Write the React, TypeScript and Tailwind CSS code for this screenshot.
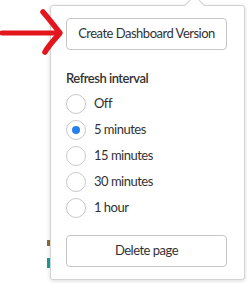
import { useState } from "react";

const options = ["Off", "5 minutes", "15 minutes", "30 minutes", "1 hour"];

function Radio({ label, checked, onSelect }: { label: string; checked: boolean; onSelect: () => void }) {
  return (
    <label className="flex h-[26px] cursor-pointer items-center gap-2" onClick={onSelect}>
      <span className="flex h-5 w-5 items-center justify-center rounded-full border border-[#c9c9c9] bg-white">
        {checked && <span className="h-2 w-2 rounded-full bg-[#2680eb]" />}
      </span>
      <span className="text-[13px] tracking-[-0.5px] text-[#323232]">{label}</span>
    </label>
  );
}

export default function App() {
  const [selected, setSelected] = useState("5 minutes");

  return (
    <div className="relative h-[283px] w-[247px] overflow-hidden bg-white" style={{ fontFamily: "Lato, 'Noto Sans', sans-serif" }}>
      {/* page content peeking out behind the popover */}
      <div className="absolute left-[47px] top-[240px] h-[6px] w-[3px] bg-[#8a6d2f]" />
      <div className="absolute left-[47px] top-[258px] h-[10px] w-[3px] bg-[#14a09a]" />

      <div className="ml-[50px] mt-[5px] w-[195px]">
        <div className="relative flex flex-col rounded-[3px] border border-[#d3d3d3] bg-white px-[15px] pb-[12px] pt-[12px] shadow-[0_1px_4px_rgba(0,0,0,0.15)]">
          <div className="absolute -top-[8px] left-[136px] h-[15px] w-[15px] rotate-45 border-l border-t border-[#d3d3d3] bg-white" />

          <button className="relative h-8 w-[161px] whitespace-nowrap rounded-[4px] border border-[#c6c6c6] bg-white text-[13px] tracking-[-0.5px] text-[#323232]">
            Create Dashboard Version
          </button>

          <div className="mt-[18px] text-[13px] font-semibold leading-5 tracking-[-0.5px] text-[#323232]">Refresh interval</div>

          <div className="mt-[3px] flex flex-col">
            {options.map((o) => (
              <Radio key={o} label={o} checked={selected === o} onSelect={() => setSelected(o)} />
            ))}
          </div>

          <button className="mt-[14px] h-8 w-[161px] rounded-[4px] border border-[#c6c6c6] bg-white text-[13px] tracking-[-0.5px] text-[#323232]">
            Delete page
          </button>
        </div>
      </div>

      <svg className="absolute left-0 top-0" width="70" height="60" viewBox="0 0 70 60">
        <path d="M2 33 L58 33" stroke="#e3161d" strokeWidth="5" strokeLinecap="round" fill="none" />
        <path d="M43 12 C50 20 56 28 60 33 C55 39 49 45 45 52" stroke="#e3161d" strokeWidth="5.5" strokeLinecap="round" strokeLinejoin="round" fill="none" />
      </svg>
    </div>
  );
}
